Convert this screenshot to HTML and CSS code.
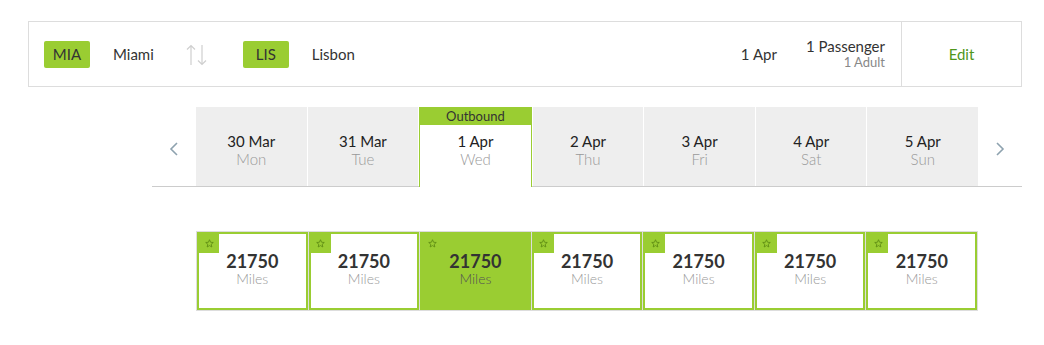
FILE: index.html
```html
<!DOCTYPE html>
<html lang="en">
<head>
<meta charset="utf-8">
<title>Flight search</title>
<link rel="stylesheet" href="styles.css">
</head>
<body>
<div class="page">
  <div class="route">
    <div class="route-main">
      <span class="code">MIA</span>
      <span class="city city-from">Miami</span>
      <svg class="swap" width="22" height="22" viewBox="0 0 22 22" aria-hidden="true">
        <path d="M5 21V1.5M1 5.5L5 1.5L9 5.5" fill="none" stroke="#cfcfcf" stroke-width="1.2"/>
        <path d="M16 1V20.5M12 16.5L16 20.5L20 16.5" fill="none" stroke="#cfcfcf" stroke-width="1.2"/>
      </svg>
      <span class="code">LIS</span>
      <span class="city">Lisbon</span>
    </div>
    <div class="route-date">1 Apr</div>
    <div class="pax">
      <div class="pax-main">1 Passenger</div>
      <div class="pax-sub">1 Adult</div>
    </div>
    <div class="edit">Edit</div>
  </div>

  <div class="strip">
    <div class="nav">
      <svg width="10" height="14" viewBox="0 0 10 14" aria-hidden="true"><path d="M8 1L2 7L8 13" fill="none" stroke="#8ea2af" stroke-width="1.6"/></svg>
    </div>
    <div class="tabs">
      <div class="tab"><div class="t-date">30 Mar</div><div class="t-day">Mon</div></div>
      <div class="tab"><div class="t-date">31 Mar</div><div class="t-day">Tue</div></div>
      <div class="tab tab-sel"><div class="t-head">Outbound</div><div class="t-date">1 Apr</div><div class="t-day">Wed</div></div>
      <div class="tab"><div class="t-date">2 Apr</div><div class="t-day">Thu</div></div>
      <div class="tab"><div class="t-date">3 Apr</div><div class="t-day">Fri</div></div>
      <div class="tab"><div class="t-date">4 Apr</div><div class="t-day">Sat</div></div>
      <div class="tab"><div class="t-date">5 Apr</div><div class="t-day">Sun</div></div>
    </div>
    <div class="nav">
      <svg width="10" height="14" viewBox="0 0 10 14" aria-hidden="true"><path d="M2 1L8 7L2 13" fill="none" stroke="#8ea2af" stroke-width="1.6"/></svg>
    </div>
  </div>

  <div class="fares">
    <div class="card"><span class="corner"><svg width="9" height="9" viewBox="0 0 10 10"><path d="M5 0.8L6.2 3.6L9.2 3.9L6.9 5.8L7.6 8.9L5 7.3L2.4 8.9L3.1 5.8L0.8 3.9L3.8 3.6Z" fill="none" stroke="#5b8a12" stroke-width="0.9"/></svg></span><div class="num">21750</div><div class="unit">Miles</div></div>
    <div class="card"><span class="corner"><svg width="9" height="9" viewBox="0 0 10 10"><path d="M5 0.8L6.2 3.6L9.2 3.9L6.9 5.8L7.6 8.9L5 7.3L2.4 8.9L3.1 5.8L0.8 3.9L3.8 3.6Z" fill="none" stroke="#5b8a12" stroke-width="0.9"/></svg></span><div class="num">21750</div><div class="unit">Miles</div></div>
    <div class="card card-sel"><span class="corner"><svg width="9" height="9" viewBox="0 0 10 10"><path d="M5 0.8L6.2 3.6L9.2 3.9L6.9 5.8L7.6 8.9L5 7.3L2.4 8.9L3.1 5.8L0.8 3.9L3.8 3.6Z" fill="none" stroke="#5b8a12" stroke-width="0.9"/></svg></span><div class="num">21750</div><div class="unit">Miles</div></div>
    <div class="card"><span class="corner"><svg width="9" height="9" viewBox="0 0 10 10"><path d="M5 0.8L6.2 3.6L9.2 3.9L6.9 5.8L7.6 8.9L5 7.3L2.4 8.9L3.1 5.8L0.8 3.9L3.8 3.6Z" fill="none" stroke="#5b8a12" stroke-width="0.9"/></svg></span><div class="num">21750</div><div class="unit">Miles</div></div>
    <div class="card"><span class="corner"><svg width="9" height="9" viewBox="0 0 10 10"><path d="M5 0.8L6.2 3.6L9.2 3.9L6.9 5.8L7.6 8.9L5 7.3L2.4 8.9L3.1 5.8L0.8 3.9L3.8 3.6Z" fill="none" stroke="#5b8a12" stroke-width="0.9"/></svg></span><div class="num">21750</div><div class="unit">Miles</div></div>
    <div class="card"><span class="corner"><svg width="9" height="9" viewBox="0 0 10 10"><path d="M5 0.8L6.2 3.6L9.2 3.9L6.9 5.8L7.6 8.9L5 7.3L2.4 8.9L3.1 5.8L0.8 3.9L3.8 3.6Z" fill="none" stroke="#5b8a12" stroke-width="0.9"/></svg></span><div class="num">21750</div><div class="unit">Miles</div></div>
    <div class="card"><span class="corner"><svg width="9" height="9" viewBox="0 0 10 10"><path d="M5 0.8L6.2 3.6L9.2 3.9L6.9 5.8L7.6 8.9L5 7.3L2.4 8.9L3.1 5.8L0.8 3.9L3.8 3.6Z" fill="none" stroke="#5b8a12" stroke-width="0.9"/></svg></span><div class="num">21750</div><div class="unit">Miles</div></div>
  </div>
</div>
</body>
</html>
```

FILE: styles.css
```css
html, body {
  margin: 0;
  padding: 0;
  background: #fff;
}
body {
  font-family: Lato, "Open Sans", "Liberation Sans", sans-serif;
  color: #333;
}
.page {
  padding: 21px 22px 0 28px;
}

/* route summary */
.route {
  display: flex;
  align-items: center;
  height: 64px;
  border: 1px solid #dddddd;
}
.route-main {
  flex: 1;
  display: flex;
  align-items: center;
  padding-left: 15px;
}
.code {
  display: inline-block;
  width: 46px;
  height: 27px;
  line-height: 27px;
  text-align: center;
  background: #9acd32;
  border-radius: 2px;
  font-size: 15px;
  color: #333;
}
.city {
  font-size: 15px;
  color: #333;
  margin-left: 23px;
}
.city-from {
  margin-right: 32px;
}
.swap {
  margin-right: 35px;
  margin-top: 2px;
}
.route-date {
  font-size: 15px;
  color: #333;
  margin-right: 29px;
}
.pax {
  text-align: right;
  padding-right: 16px;
}
.pax-main {
  font-size: 15px;
  line-height: 17px;
  color: #333;
}
.pax-sub {
  font-size: 13px;
  line-height: 15px;
  color: #888;
}
.edit {
  align-self: stretch;
  width: 119px;
  border-left: 1px solid #dddddd;
  display: flex;
  align-items: center;
  justify-content: center;
  font-size: 15px;
  color: #4f961c;
}

/* date strip */
.strip {
  display: flex;
  margin: 20px 0 0 124px;
  border-bottom: 1px solid #cccccc;
}
.nav {
  width: 44px;
  flex: none;
  display: flex;
  align-items: center;
  justify-content: center;
  padding-top: 5px;
}
.tabs {
  flex: 1;
  display: flex;
  gap: 1px;
}
.tab {
  flex: 1;
  height: 79px;
  background: #eeeeee;
  text-align: center;
  box-sizing: border-box;
  padding-top: 25px;
}
.tab-sel {
  position: relative;
  z-index: 1;
  margin-bottom: -1px;
  height: 80px;
  background: #fff;
  border-left: 1px solid #9acd32;
  border-right: 1px solid #9acd32;
  padding-top: 7px;
}
.t-head {
  margin: -7px -1px 7px;
  height: 18px;
  line-height: 18px;
  background: #9acd32;
  font-size: 13px;
  color: #333;
}
.t-date {
  font-size: 15px;
  line-height: 18px;
  color: #222;
}
.t-day {
  font-size: 15px;
  line-height: 18px;
  font-weight: 300;
  color: #999;
}

/* fares */
.fares {
  display: flex;
  gap: 1px;
  margin: 44px 44px 0 168px;
  border: 1px solid #dddddd;
  background: #dddddd;
}
.card {
  position: relative;
  flex: 1;
  height: 78px;
  box-sizing: border-box;
  border: 2px solid #9acd32;
  background: #fff;
  text-align: center;
  padding-top: 16px;
}
.card-sel {
  background: #9acd32;
}
.corner {
  position: absolute;
  top: 0;
  left: 0;
  width: 20px;
  height: 19px;
  background: #9acd32;
  display: flex;
  align-items: center;
  justify-content: center;
}
.num {
  font-size: 18px;
  line-height: 22px;
  font-weight: 700;
  color: #333;
}
.unit {
  font-size: 14px;
  line-height: 14px;
  font-weight: 300;
  color: #999;
}
.card-sel .unit {
  color: #555;
}
```
